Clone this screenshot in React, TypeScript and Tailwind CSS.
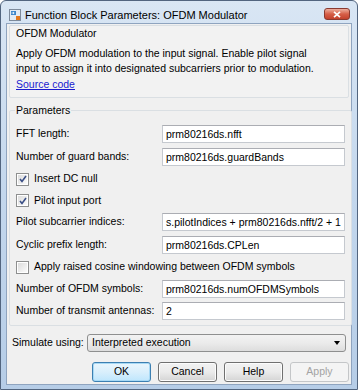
import React from 'react'

const font = { fontFamily: '"Liberation Sans", Arial, sans-serif' }

function Field({ label, value, h }: { label: string; value: string; h: string }) {
  return (
    <div className={'flex items-center ' + h}>
      <span className="w-[146px] shrink-0 whitespace-nowrap">{label}</span>
      <div className="flex-1 min-w-0 h-[18px] bg-white border border-[#c5c9cf] border-t-[#abadb3] px-[3px] leading-[16px] overflow-hidden whitespace-nowrap">
        {value}
      </div>
    </div>
  )
}

function Check({ label, checked, h }: { label: string; checked?: boolean; h: string }) {
  return (
    <div className={'flex items-center gap-[5px] ' + h}>
      <div className="w-[13px] h-[13px] border border-[#8e8f8f] p-[1px] bg-white">
        <div className="w-full h-full bg-gradient-to-br from-[#dcdcdc] to-[#fbfbfb] flex items-center justify-center">
          {checked && (
            <svg width="8" height="8" viewBox="0 0 8 8">
              <path d="M1 4 L3 6.5 L7 1" stroke="#3b4f86" strokeWidth="1.6" fill="none" />
            </svg>
          )}
        </div>
      </div>
      <span className="whitespace-nowrap">{label}</span>
    </div>
  )
}

function Btn({ label, def, disabled }: { label: string; def?: boolean; disabled?: boolean }) {
  return (
    <div
      className={
        'w-[59px] h-[20px] rounded-[3px] border flex items-center justify-center ' +
        (disabled
          ? 'border-[#c4c6c8] bg-[#f4f4f4] text-[#a3a3a3]'
          : def
          ? 'border-[#3c7fb1] bg-gradient-to-b from-[#eaf6fd] via-[#d9effc] to-[#bee6fd] shadow-[inset_0_0_0_1px_#a7d9f5]'
          : 'border-[#707070] bg-gradient-to-b from-[#f2f2f2] via-[#ebebeb] to-[#d4d4d4] shadow-[inset_0_0_0_1px_#fcfcfc]')
      }
    >
      {label}
    </div>
  )
}

export default function App() {
  return (
    <div
      style={font}
      className="w-[358px] h-[390px] flex flex-col bg-gradient-to-b from-[#d9e6f4] via-[#c3d7ed] to-[#b6cde7] border border-[#52657f] rounded-t-[6px] text-[10.5px] text-black overflow-hidden"
    >
      {/* Title bar */}
      <div className="h-[22px] shrink-0 flex items-start pl-[8px] pr-[6px]">
        <svg width="12" height="12" viewBox="0 0 12 12" className="mt-[8px] mr-[4px]">
          <rect x="0.5" y="0.5" width="11" height="11" fill="#e4ebf3" stroke="#7d8a9b" />
          <rect x="2" y="2" width="5" height="4" fill="#3d86c9" />
          <path d="M2.5 4 L5 4 M4 3 L5.2 4 L4 5" stroke="#fff" strokeWidth="0.8" fill="none" />
          <rect x="7" y="7" width="4" height="4" fill="#e3781c" />
        </svg>
        <span className="flex-1 text-[11px] mt-[8px] leading-[13px] whitespace-nowrap">
          Function Block Parameters: OFDM Modulator
        </span>
        <div className="w-[26px] h-[12px] mt-[7px] mr-[1px] rounded-[3px] border border-[#8a3a30] bg-gradient-to-b from-[#ecae9e] via-[#d65f48] to-[#c3412c] flex items-center justify-center">
          <svg width="8" height="7" viewBox="0 0 8 7">
            <path d="M1 0.8 L7 6.2 M7 0.8 L1 6.2" stroke="#fff" strokeWidth="1.7" />
          </svg>
        </div>
      </div>

      {/* Client area */}
      <div className="flex-1 mx-[5px] mb-[4px] bg-[#f0f0f0] border border-[#8fa4bf] flex flex-col px-[2px] pt-[1px]">
        {/* Description */}
        <div className="border border-[#dadfe3] rounded-[2px] px-[6px] pb-[5px] bg-[#f2f2f2]">
          <div className="h-[14px] leading-[14px]">OFDM Modulator</div>
          <p className="mt-[6px] leading-[15px]">
            Apply OFDM modulation to the input signal. Enable pilot signal
            <br />
            input to assign it into designated subcarriers prior to modulation.
          </p>
          <div className="mt-[1px] text-[#1a1ad0] underline leading-[15px]">Source code</div>
        </div>

        {/* Parameters */}
        <fieldset className="mt-[5px] border border-[#dadfe3] rounded-[2px] px-[6px] pb-[3px]">
          <legend className="px-[1px] -ml-[1px] leading-[15px]">Parameters</legend>
          <div className="flex flex-col mt-[4px]">
            <Field h="h-[23px]" label="FFT length:" value="prm80216ds.nfft" />
            <Field h="h-[23px]" label="Number of guard bands:" value="prm80216ds.guardBands" />
            <Check h="h-[22px]" label="Insert DC null" checked />
            <Check h="h-[21px]" label="Pilot input port" checked />
            <Field h="h-[22px]" label="Pilot subcarrier indices:" value="s.pilotIndices + prm80216ds.nfft/2 + 1" />
            <Field h="h-[23px]" label="Cyclic prefix length:" value="prm80216ds.CPLen" />
            <Check h="h-[22px]" label="Apply raised cosine windowing between OFDM symbols" />
            <Field h="h-[22px]" label="Number of OFDM symbols:" value="prm80216ds.numOFDMSymbols" />
            <Field h="h-[22px]" label="Number of transmit antennas:" value="2" />
          </div>
        </fieldset>

        {/* Simulate using */}
        <div className="flex items-center mt-[7px] pl-[3px] pr-[3px] h-[19px]">
          <span className="w-[75px] shrink-0 whitespace-nowrap">Simulate using:</span>
          <div className="flex-1 h-[18px] rounded-[3px] border border-[#8e8f8f] bg-gradient-to-b from-[#f2f2f2] via-[#ebebeb] to-[#dddddd] flex items-center pl-[4px] pr-[5px]">
            <span className="flex-1">Interpreted execution</span>
            <svg width="6" height="4" viewBox="0 0 6 4">
              <path d="M0 0 L6 0 L3 4 Z" fill="#000" />
            </svg>
          </div>
        </div>

        {/* Buttons */}
        <div className="flex justify-end gap-[7px] mt-[10px]">
          <Btn label="OK" def />
          <Btn label="Cancel" />
          <Btn label="Help" />
          <Btn label="Apply" disabled />
        </div>
      </div>
    </div>
  )
}
